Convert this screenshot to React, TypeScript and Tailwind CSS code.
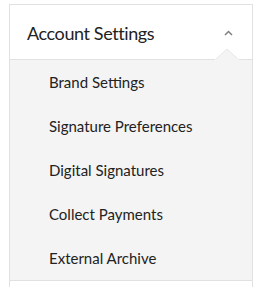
import React from "react";

const items = [
  "Brand Settings",
  "Signature Preferences",
  "Digital Signatures",
  "Collect Payments",
  "External Archive",
];

export default function App() {
  return (
    <div
      className="w-[253px] h-[287px] bg-white overflow-hidden"
      style={{ fontFamily: "Lato, 'Open Sans', sans-serif" }}
    >
      <div className="ml-[9px] mt-[4px] h-[283px] border-l border-r border-t border-[#e1e1e1] flex flex-col">
        <div className="relative h-[55px] border-b border-[#e1e1e1] flex items-center justify-between pl-[17px] pr-[19px]">
          <span className="text-[18px] tracking-[-0.4px] text-[#222222] leading-none mt-[1px]">Account Settings</span>
          <svg width="9" height="6" viewBox="0 0 9 6" className="mt-[1px]">
            <path d="M1 5 L4.5 1.5 L8 5" fill="none" stroke="#808080" strokeWidth="1.5" />
          </svg>
          <svg
            width="24"
            height="12"
            viewBox="0 0 24 12"
            className="absolute right-[13px] bottom-[-1px]"
          >
            <polygon points="0,12 12,1 24,12" fill="#f4f4f4" stroke="#e6e6e6" strokeWidth="1" />
            <rect x="0" y="11" width="24" height="1" fill="#f4f4f4" />
          </svg>
        </div>
        <div className="bg-[#f4f4f4] border-b border-[#e1e1e1] flex flex-col">
          {items.map((t) => (
            <div key={t} className="h-[44px] flex items-center pl-[39px] text-[15px] text-[#222222]">
              {t}
            </div>
          ))}
        </div>
      </div>
    </div>
  );
}
